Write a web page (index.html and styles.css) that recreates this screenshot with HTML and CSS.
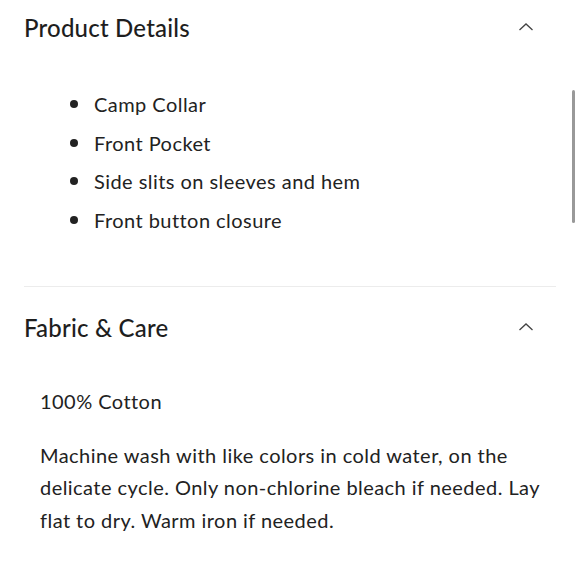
FILE: index.html
```html
<!DOCTYPE html>
<html lang="en">
<head>
<meta charset="utf-8">
<title>Product Details</title>
<link rel="stylesheet" href="styles.css">
</head>
<body>
<div class="page">
  <section class="acc acc-first">
    <div class="acc-head">
      <h2 class="acc-title">Product Details</h2>
      <svg class="chev" width="16" height="10" viewBox="0 0 16 10"><path d="M1.5 8 L8 2 L14.5 8" fill="none" stroke="#444" stroke-width="1.3"/></svg>
    </div>
    <ul class="bullets">
      <li>Camp Collar</li>
      <li>Front Pocket</li>
      <li>Side slits on sleeves and hem</li>
      <li>Front button closure</li>
    </ul>
  </section>
  <section class="acc">
    <div class="acc-head">
      <h2 class="acc-title">Fabric &amp; Care</h2>
      <svg class="chev" width="16" height="10" viewBox="0 0 16 10"><path d="M1.5 8 L8 2 L14.5 8" fill="none" stroke="#444" stroke-width="1.3"/></svg>
    </div>
    <div class="care">
      <p class="care-p">100% Cotton</p>
      <p class="care-p">Machine wash with like colors in cold water, on the delicate cycle. Only non-chlorine bleach if needed. Lay flat to dry. Warm iron if needed.</p>
    </div>
  </section>
</div>
<div class="scrollthumb"></div>
</body>
</html>
```
FILE: styles.css
```css
html, body {
  margin: 0;
  padding: 0;
  background: #fff;
}
body {
  font-family: Lato, "Liberation Sans", sans-serif;
  color: #222;
  width: 580px;
  height: 580px;
  overflow: hidden;
  position: relative;
}
.page {
  width: 532px;
  padding-left: 24px;
}
.acc {
  border-top: 1px solid #ececec;
}
.acc-first {
  border-top: none;
}
.acc-head {
  display: flex;
  align-items: center;
  justify-content: space-between;
  padding-right: 22px;
  height: 54px;
}
.acc:not(.acc-first) .acc-head {
  margin-top: 13px;
}
.acc-title {
  margin: 0;
  font-size: 24px;
  font-weight: 500;
  letter-spacing: 0.2px;
  color: #1e1e1e;
}
.chev {
  display: block;
}
.bullets {
  list-style: none;
  margin: 31px 0 47px 0;
  padding-left: 46px;
  font-size: 20px;
  line-height: 38.5px;
  letter-spacing: 0.45px;
}
.bullets li {
  display: flex;
  align-items: center;
  gap: 16px;
}
.bullets li::before {
  content: "";
  width: 8px;
  height: 8px;
  border-radius: 50%;
  background: #222;
  flex: none;
}
.care {
  padding: 31px 0 30px 16px;
  font-size: 20px;
  letter-spacing: 0.45px;
}
.care-p {
  margin: 0 0 21px 0;
  line-height: 32.5px;
}
.scrollthumb {
  position: absolute;
  left: 572px;
  top: 90px;
  width: 3px;
  height: 133px;
  border-radius: 2px;
  background: #999;
}
```
